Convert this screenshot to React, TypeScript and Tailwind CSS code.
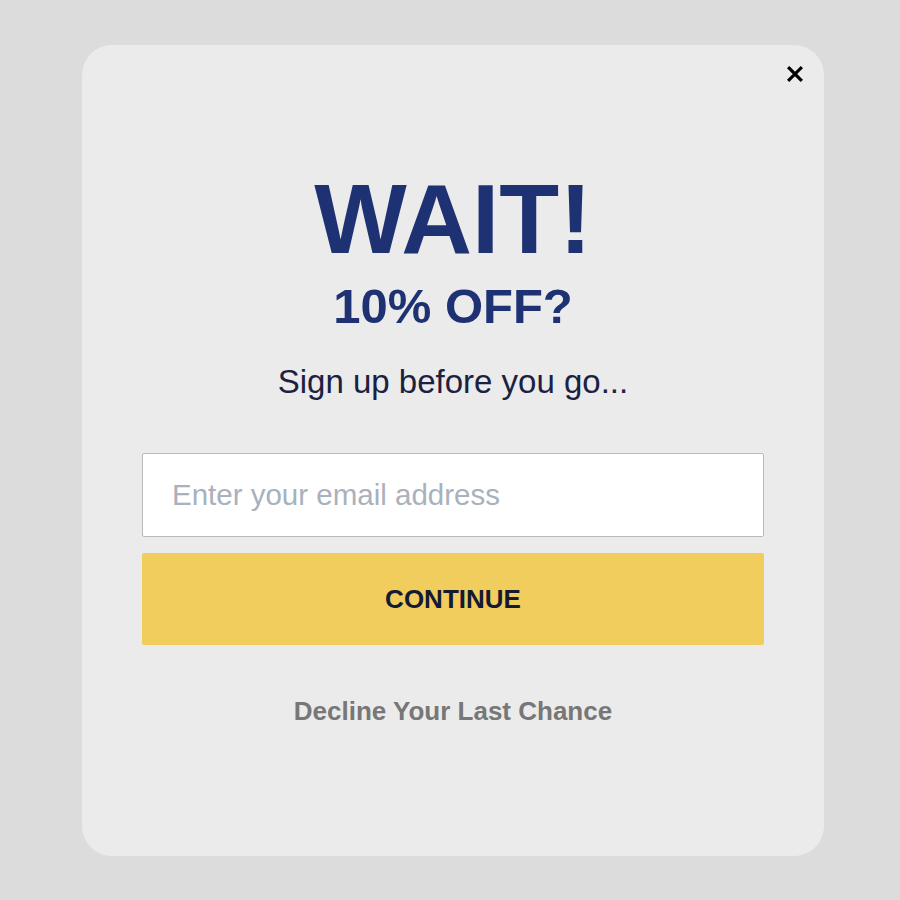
import React from "react";

export default function App() {
  return (
    <div className="min-h-[900px] w-[900px] bg-[#dcdcdc] pl-[82px] pt-[45px] [font-family:'Liberation_Sans',Arial,sans-serif]">
      <div className="relative flex h-[811px] w-[742px] flex-col items-center rounded-[30px] bg-[#ebebeb] px-[60px] pt-[125px]">
        <button className="absolute right-[21px] top-[21px] flex h-[16px] w-[16px] items-center justify-center" aria-label="Close">
          <svg width="18" height="18" viewBox="0 0 18 18">
            <path d="M2.5 2.5 L15.5 15.5 M15.5 2.5 L2.5 15.5" stroke="#000" strokeWidth="3.6" strokeLinecap="square" />
          </svg>
        </button>
        <h1 className="text-[98px] font-bold leading-[98px] text-[#1e3273]">WAIT!</h1>
        <h2 className="mt-[13px] text-[49px] font-bold leading-[50px] text-[#1e3273]">10% OFF?</h2>
        <p className="mt-[34px] text-[33px] leading-[33px] text-[#1b2140]">Sign up before you go...</p>
        <input
          type="email"
          placeholder="Enter your email address"
          className="mt-[55px] h-[84px] w-full rounded-[2px] border border-[#b9b9b9] bg-white pl-[29px] text-[29.5px] text-[#333] outline-none placeholder:text-[#a9b1bc]"
        />
        <button className="mt-[16px] flex h-[92px] w-full items-center justify-center rounded-[2px] bg-[#f0cd5c] text-[26px] font-bold text-[#141a33]">
          CONTINUE
        </button>
        <a className="mt-[53px] text-[26px] font-bold leading-[26px] text-[#777777]">Decline Your Last Chance</a>
      </div>
    </div>
  );
}
